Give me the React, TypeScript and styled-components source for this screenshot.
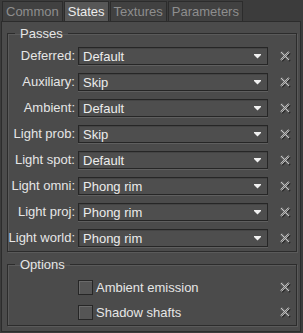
import React from "react";
import styled, { createGlobalStyle } from "styled-components";

const Global = createGlobalStyle`
  html, body { margin: 0; padding: 0; background: #3c3c3c; }
  body { font-family: "Liberation Sans", Arial, sans-serif; font-size: 13px; }
`;

const Root = styled.div`
  width: 303px;
  height: 333px;
  background: #3c3c3c;
  display: flex;
  flex-direction: column;
  box-sizing: border-box;
`;

const TabBar = styled.div`
  display: flex;
  height: 21px;
  padding: 1px 0 0 2px;
  box-sizing: border-box;
`;

const Tab = styled.div<{ $active?: boolean }>`
  height: 20px;
  line-height: 19px;
  padding: 0 3px;
  box-sizing: border-box;
  border: 1px solid #2c2c2c;
  border-bottom: none;
  margin-right: 1px;
  background: ${(p) => (p.$active ? "#575757" : "#414141")};
  color: ${(p) => (p.$active ? "#ececec" : "#8e8e8e")};
  white-space: nowrap;
`;

const Panel = styled.div`
  flex: 1;
  margin: 0 2px 1px 1px;
  border: 1px solid #2c2c2c;
  background: #4b4b4b;
  padding: 4px 3px 0 5px;
  display: flex;
  flex-direction: column;
  gap: 5px;
`;

const Group = styled.fieldset`
  margin: 0;
  padding: 6px 0 0 0;
  border: 1px solid #2c2c2c;
  box-shadow: inset 1px 1px 0 #5a5a5a, 1px 1px 0 #5a5a5a;
  min-width: 0;
`;

const Legend = styled.legend`
  margin-left: 7px;
  padding: 0 5px;
  line-height: 15px;
  color: #e6e6e6;
`;

const Rows = styled.div<{ $gap: number; $pad: number }>`
  display: grid;
  grid-template-columns: 67px 190px 28px;
  column-gap: 3px;
  row-gap: ${(p) => p.$gap}px;
  align-items: center;
  padding-bottom: ${(p) => p.$pad}px;
`;

const Label = styled.div`
  text-align: right;
  color: #e6e6e6;
  white-space: nowrap;
  line-height: 18px;
`;

const Combo = styled.div`
  height: 18px;
  box-sizing: border-box;
  border: 1px solid #262626;
  background: #4e4e4e;
  box-shadow: 0 1px 0 #5f5f5f, inset 1px 1px 0 #444;
  color: #ececec;
  display: flex;
  align-items: center;
  padding: 0 0 0 4px;
  justify-content: space-between;
`;

const Arrow = styled.svg`
  margin-right: 6px;
  flex: none;
`;

const ClearBox = styled.div`
  display: flex;
  justify-content: center;
  align-items: center;
  height: 18px;
`;

const Check = styled.div`
  display: flex;
  align-items: center;
  gap: 3px;
  color: #e6e6e6;
  height: 18px;
`;

const Box = styled.div`
  width: 15px;
  height: 15px;
  box-sizing: border-box;
  border: 1px solid #262626;
  background: #555;
  box-shadow: inset 1px 1px 0 #6a6a6a;
`;

const ClearIcon = () => (
  <svg width="11" height="11" viewBox="0 0 11 11">
    <defs>
      <pattern id="chk" width="2" height="2" patternUnits="userSpaceOnUse">
        <rect width="2" height="2" fill="#727272" />
        <rect width="1" height="1" fill="#c4c4c4" />
        <rect x="1" y="1" width="1" height="1" fill="#c4c4c4" />
      </pattern>
    </defs>
    <g stroke="#2a2a2a" strokeWidth="2" transform="translate(1,1)">
      <line x1="1" y1="1" x2="9" y2="9" />
      <line x1="9" y1="1" x2="1" y2="9" />
    </g>
    <g stroke="url(#chk)" strokeWidth="2.2">
      <line x1="1" y1="1" x2="9" y2="9" />
      <line x1="9" y1="1" x2="1" y2="9" />
    </g>
  </svg>
);

const DownArrow = () => (
  <Arrow width="7" height="5" viewBox="0 0 7 5">
    <rect x="0" y="0" width="7" height="1" fill="#f0f0f0" />
    <polygon points="0,1 7,1 3.5,4.5" fill="#f0f0f0" />
  </Arrow>
);

const passes: [string, string][] = [
  ["Deferred:", "Default"],
  ["Auxiliary:", "Skip"],
  ["Ambient:", "Default"],
  ["Light prob:", "Skip"],
  ["Light spot:", "Default"],
  ["Light omni:", "Phong rim"],
  ["Light proj:", "Phong rim"],
  ["Light world:", "Phong rim"],
];

const options = ["Ambient emission", "Shadow shafts"];

export default function App() {
  return (
    <>
      <Global />
      <Root>
        <TabBar>
          <Tab>Common</Tab>
          <Tab $active>States</Tab>
          <Tab>Textures</Tab>
          <Tab>Parameters</Tab>
        </TabBar>
        <Panel>
          <Group>
            <Legend>Passes</Legend>
            <Rows $gap={8} $pad={4}>
              {passes.map(([l, v]) => (
                <React.Fragment key={l}>
                  <Label>{l}</Label>
                  <Combo>
                    <span>{v}</span>
                    <DownArrow />
                  </Combo>
                  <ClearBox>
                    <ClearIcon />
                  </ClearBox>
                </React.Fragment>
              ))}
            </Rows>
          </Group>
          <Group>
            <Legend>Options</Legend>
            <Rows $gap={7} $pad={4}>
              {options.map((o) => (
                <React.Fragment key={o}>
                  <span />
                  <Check>
                    <Box />
                    <span>{o}</span>
                  </Check>
                  <ClearBox>
                    <ClearIcon />
                  </ClearBox>
                </React.Fragment>
              ))}
            </Rows>
          </Group>
        </Panel>
      </Root>
    </>
  );
}
